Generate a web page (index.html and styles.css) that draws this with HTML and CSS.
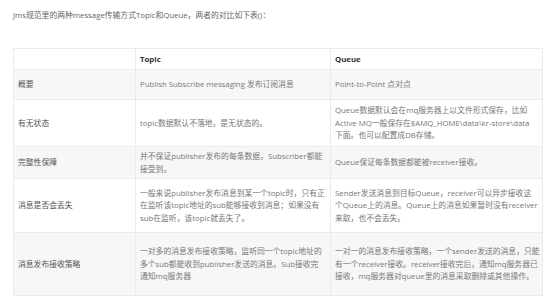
FILE: index.html
```html
<!DOCTYPE html>
<html lang="zh-CN">
<head>
<meta charset="utf-8">
<link rel="stylesheet" href="styles.css">
</head>
<body>
<p class="intro">Jms规范里的两种message传输方式Topic和Queue，两者的对比如下表()：</p>
<table class="cmp">
  <colgroup>
    <col class="c1"><col class="c2"><col class="c3">
  </colgroup>
  <thead>
    <tr class="h">
      <th></th><th>Topic</th><th>Queue</th>
    </tr>
  </thead>
  <tbody>
    <tr class="r1 alt">
      <td class="lbl">概要</td>
      <td>Publish Subscribe messaging 发布订阅消息</td>
      <td>Point-to-Point 点对点</td>
    </tr>
    <tr class="r2">
      <td class="lbl">有无状态</td>
      <td>topic数据默认不落地，是无状态的。</td>
      <td>Queue数据默认会在mq服务器上以文件形式保存，比如<br>Active MQ一般保存在$AMQ_HOME\data\kr-store\data<br>下面。也可以配置成DB存储。</td>
    </tr>
    <tr class="r3 alt">
      <td class="lbl">完整性保障</td>
      <td>并不保证publisher发布的每条数据，Subscriber都能<br>接受到。</td>
      <td>Queue保证每条数据都能被receiver接收。</td>
    </tr>
    <tr class="r4">
      <td class="lbl">消息是否会丢失</td>
      <td>一般来说publisher发布消息到某一个topic时，只有正<br>在监听该topic地址的sub能够接收到消息；如果没有<br>sub在监听，该topic就丢失了。</td>
      <td>Sender发送消息到目标Queue，receiver可以异步接收这<br>个Queue上的消息。Queue上的消息如果暂时没有receiver<br>来取，也不会丢失。</td>
    </tr>
    <tr class="r5 alt">
      <td class="lbl">消息发布接收策略</td>
      <td>一对多的消息发布接收策略，监听同一个topic地址的<br>多个sub都能收到publisher发送的消息。Sub接收完<br>通知mq服务器</td>
      <td>一对一的消息发布接收策略，一个sender发送的消息，只能<br>有一个receiver接收。receiver接收完后，通知mq服务器已<br>接收，mq服务器对queue里的消息采取删除或其他操作。</td>
    </tr>
  </tbody>
</table>
</body>
</html>
```
FILE: styles.css
```css
html, body {
  margin: 0;
  padding: 0;
  background: #ffffff;
}
body {
  font-family: "Open Sans", "Noto Sans CJK SC", sans-serif;
  font-size: 7.8px;
  color: #777777;
  padding: 9px 12px 0 13px;
}
.intro {
  margin: 0;
  line-height: 12px;
  color: #666666;
}
.cmp {
  margin-top: 27px;
  border-collapse: collapse;
  width: 529px;
  table-layout: fixed;
  background: #ffffff;
}
.c1 { width: 122px; }
.c2 { width: 195px; }
.c3 { width: 212px; }
.cmp th, .cmp td {
  border: 1px solid #ebebeb;
  padding: 0 2px 0 4px;
  text-align: left;
  vertical-align: middle;
  line-height: 12.5px;
  font-weight: normal;
}
.cmp th {
  color: #333333;
  font-weight: bold;
}
.cmp td.lbl {
  color: #555555;
}
.alt td { background: #f7f7f7; }
.h { height: 21px; }
.r1 { height: 30px; }
.r2 { height: 47px; }
.r3 { height: 32px; }
.r4 { height: 54px; }
.r5 { height: 63px; }
```
